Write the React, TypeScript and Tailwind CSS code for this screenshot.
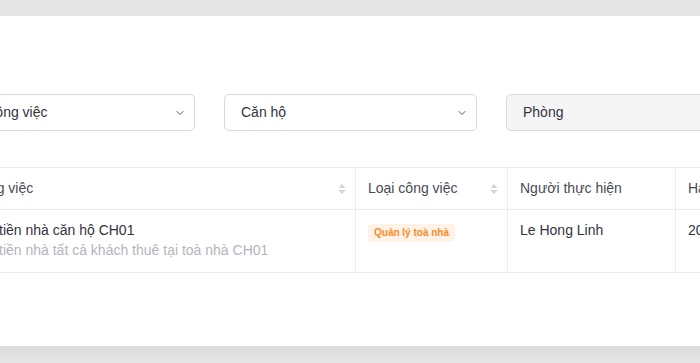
import { ChevronDown } from 'lucide-react';

function SortIcon() {
  return (
    <svg width="8" height="12" viewBox="0 0 8 12" className="shrink-0">
      <path d="M4 1 L7.5 5 L0.5 5 Z" fill="#d3d3da" />
      <path d="M4 11 L7.5 7 L0.5 7 Z" fill="#d3d3da" />
    </svg>
  );
}

function Select({ label, disabled }: { label: string; disabled?: boolean }) {
  return (
    <div
      className={
        'h-[37px] rounded-[5px] border border-[#d9d9e0] flex items-center justify-between pl-4 pr-[8px] ' +
        (disabled ? 'bg-[#f5f5f5]' : 'bg-white')
      }
    >
      <span className="text-[14px] text-[#333340]">{label}</span>
      {!disabled && <ChevronDown className="w-3 h-3 text-[#55555f]" strokeWidth={2} />}
    </div>
  );
}

export default function App() {
  return (
    <div className="w-[700px] h-[363px] overflow-hidden bg-[#e5e5e5] font-['Liberation_Sans',Arial,sans-serif]">
      <div className="mt-4 h-[330px] bg-white overflow-hidden">
        {/* bộ lọc */}
        <div className="pt-[78px] ml-[-59px] grid grid-cols-[254px_253px_253px] gap-[29px]">
          <Select label="Loại công việc" />
          <Select label="Căn hộ" />
          <Select label="Phòng" disabled />
        </div>

        {/* bảng */}
        <div className="mt-[36px] ml-[-41px] w-[900px]">
          <div className="grid grid-cols-[396px_152px_168px_184px] border-t border-b border-[#ebebf0] h-[43px]">
            <div className="flex items-center justify-between px-3 pr-[9px] text-[14px] text-[#4a4a56]">
              <span>Công việc</span>
              <SortIcon />
            </div>
            <div className="flex items-center justify-between px-3 pr-[9px] border-l border-[#ebebf0] text-[14px] text-[#4a4a56]">
              <span>Loại công việc</span>
              <SortIcon />
            </div>
            <div className="flex items-center px-3 border-l border-[#ebebf0] text-[14px] text-[#4a4a56]">
              Người thực hiện
            </div>
            <div className="flex items-center px-3 border-l border-[#ebebf0] text-[14px] text-[#4a4a56]">
              Hạn hoàn thành
            </div>
          </div>
          <div className="grid grid-cols-[396px_152px_168px_184px] border-b border-[#ebebf0] h-[63px]">
            <div className="px-3 pt-[10px]">
              <div className="text-[14px] leading-5 text-[#333340]">Thu tiền nhà căn hộ CH01</div>
              <div className="text-[14px] leading-5 text-[#b4b4bc]">Thu tiền nhà tất cả khách thuê tại toà nhà CH01</div>
            </div>
            <div className="px-3 pt-[9px] border-l border-[#ebebf0]">
              <span className="inline-flex items-center h-[18px] px-[6px] rounded-[4px] bg-[#fff2e6] text-[10px] font-bold text-[#fa8c2a]">
                Quản lý toà nhà
              </span>
            </div>
            <div className="px-3 pt-[10px] border-l border-[#ebebf0] text-[14px] leading-5 text-[#333340]">
              Le Hong Linh
            </div>
            <div className="px-3 pt-[10px] border-l border-[#ebebf0] text-[14px] leading-5 text-[#333340]">
              20/10/2023
            </div>
          </div>
        </div>
      </div>
      <div className="h-[17px] bg-gradient-to-b from-[#dcdcdc] to-[#e6e6e6]" />
    </div>
  );
}
